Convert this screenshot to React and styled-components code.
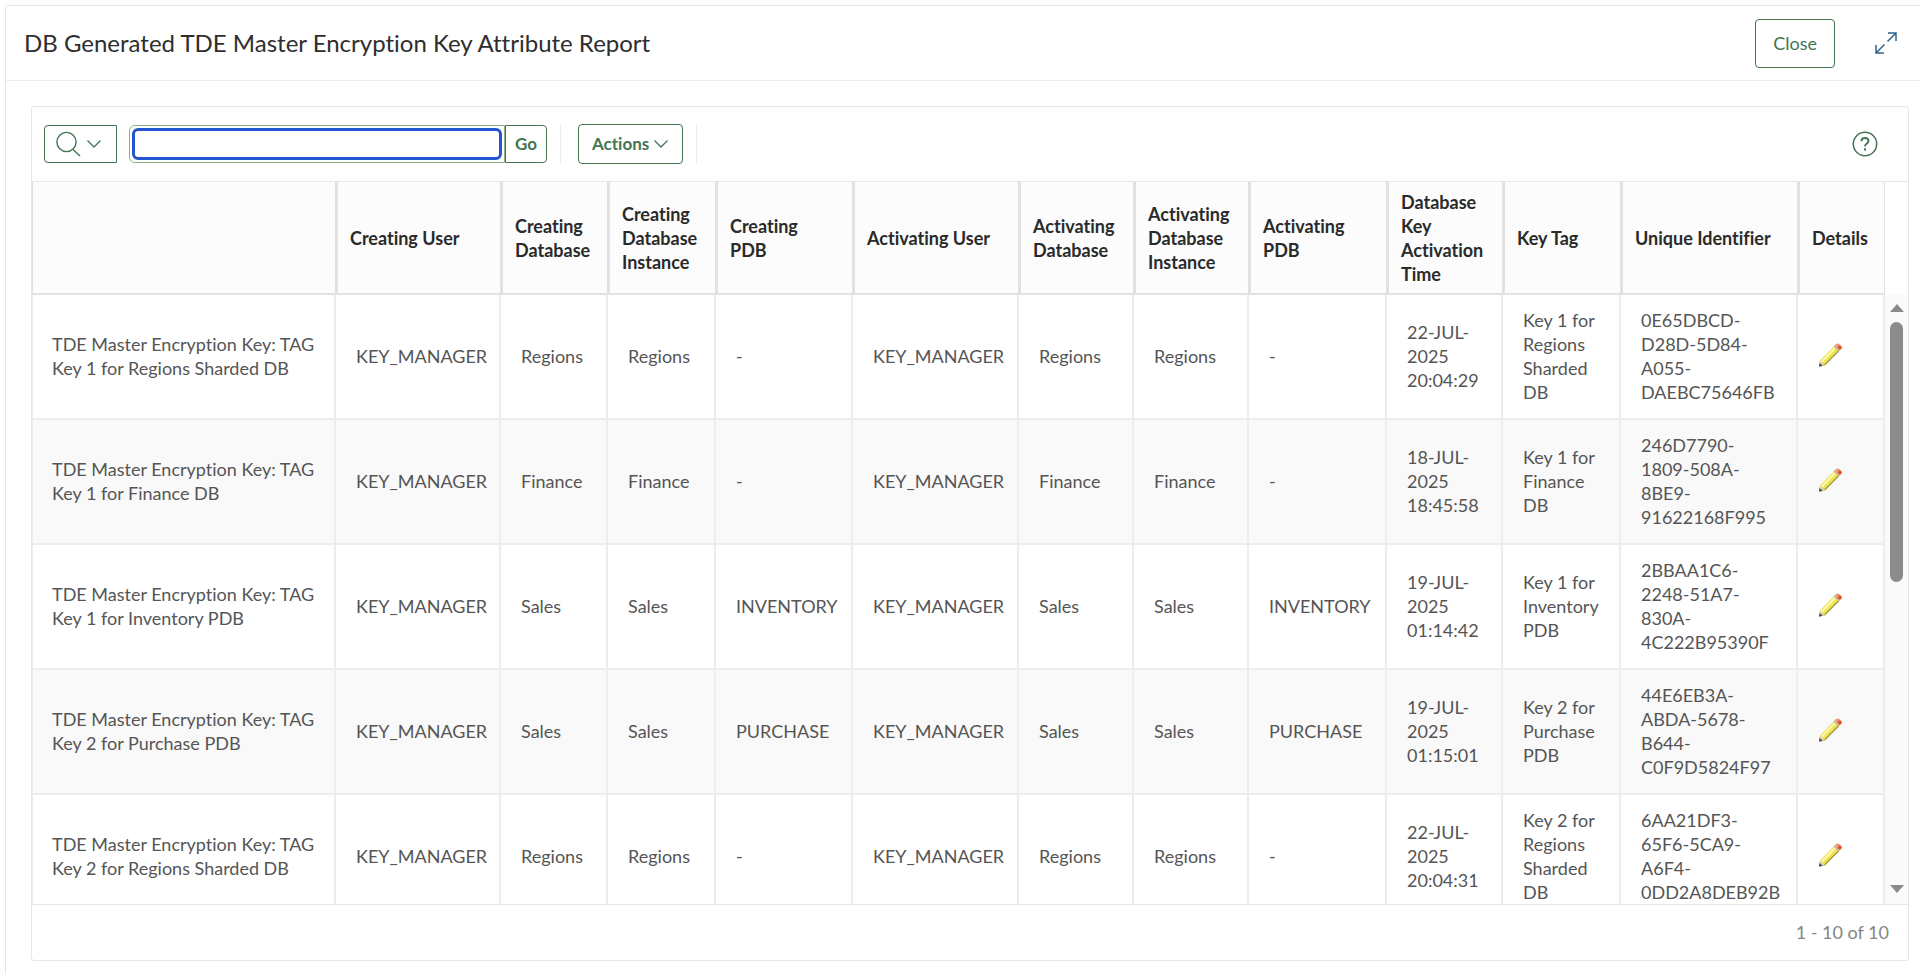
import React from 'react';
import styled, { createGlobalStyle } from 'styled-components';

const GlobalStyle = createGlobalStyle`
  *, *::before, *::after { box-sizing: border-box; }
  body {
    margin: 0;
    background: #fff;
    color: #555;
    font-family: Lato, 'Noto Sans', sans-serif;
    font-size: 18px;
    font-variant-ligatures: none;
    line-height: 24px;
  }
  button, input { font: inherit; font-variant-ligatures: none; }
`;

const green = '#437553';

const Dialog = styled.main`
  display: flex;
  flex-direction: column;
  height: 100vh;
  min-height: 600px;
  padding: 5px 0 0 5px;
  overflow: hidden;
`;

const Panel = styled.div`
  flex: 1;
  display: flex;
  flex-direction: column;
  min-height: 0;
  border: solid #e6e6e6;
  border-width: 1px 0 0 1px;
  border-radius: 3px 0 0 0;
`;

const Header = styled.header`
  display: flex;
  align-items: center;
  justify-content: space-between;
  height: 75px;
  padding: 0 19px 0 18px;
  border-bottom: 1px solid #ececec;
`;

const Title = styled.h1`
  margin: 0;
  color: #2e2e2e;
  font-size: 24px;
  font-weight: 400;
  line-height: 32px;
`;

const HeaderActions = styled.div`
  display: flex;
  align-items: center;
  gap: 36px;
`;

const Button = styled.button`
  display: inline-flex;
  align-items: center;
  justify-content: center;
  gap: 4px;
  height: ${(p) => p.$height || 40}px;
  padding: 0 ${(p) => p.$pad || 12}px;
  border: 1px solid ${green};
  border-radius: ${(p) => p.$radius || '4px'};
  background: #fff;
  color: ${green};
  font-size: ${(p) => p.$size || 17}px;
  font-weight: ${(p) => p.$weight || 700};
  cursor: pointer;
`;

const SearchMenuButton = styled(Button)`
  padding: 0 14px 0 10px;
`;

const IconButton = styled.button`
  display: flex;
  padding: 4px;
  border: 0;
  background: none;
  color: ${(p) => p.$color};
  cursor: pointer;
`;

const EditButton = styled(IconButton)`
  padding: 0 0 2px;
`;

const Region = styled.section`
  flex: 1;
  display: flex;
  flex-direction: column;
  min-height: 0;
  margin: 25px 11px 13px 25px;
  border: 1px solid #e6e6e6;
  border-radius: 3px;
`;

const Toolbar = styled.div`
  display: flex;
  align-items: center;
  height: 75px;
  padding: 0 26px 0 12px;
  border-bottom: 1px solid #e6e6e6;
`;

const SearchForm = styled.form`
  display: flex;
  margin-left: 12px;
`;

const SearchInput = styled.input`
  width: 100%;
  height: 32px;
  padding: 0 8px;
  border: 3px solid #2455d0;
  border-radius: 6px;
  outline: none;
  background: #fff;
`;

const SearchField = styled.div`
  width: 376px;
  height: 38px;
  padding: 2px;
  border: 1px solid #8fb182;
  border-radius: 6px 0 0 6px;
`;

const Divider = styled.span`
  width: 1px;
  height: 38px;
  margin: 0 ${(p) => p.$after || 0}px 0 ${(p) => p.$before || 0}px;
  background: #ececec;
`;

const HelpSlot = styled.div`
  margin-left: auto;
`;

const Grid = styled.div`
  flex: 1;
  display: flex;
  min-height: 0;
`;

const TableViewport = styled.div`
  flex: 1;
  min-width: 0;
  overflow: hidden;
`;

const Table = styled.table`
  width: 100%;
  table-layout: fixed;
  border-collapse: separate;
  border-spacing: 0;
`;

const HeadCell = styled.th`
  height: 113px;
  padding: 0 16px 0 12px;
  border: solid #e2e2e2;
  border-width: 0 1px 2px 2px;
  background: #fcfcfc;
  color: #2a2a2a;
  font-weight: 700;
  text-align: left;

  &:first-child { border-left-width: 1px; }
`;

const Cell = styled.td`
  height: 125px;
  padding: 0 16px 2px 20px;
  border: solid #ededed;
  border-width: 0 2px 2px 0;

  &:first-child { border-left-width: 1px; padding-left: 19px; }
  tr:nth-child(even) > & { background: #f9f9f9; }
`;

const ScrollGutter = styled.div`
  display: flex;
  flex-direction: column;
  width: 23px;
  padding-top: 113px;
`;

const ScrollTrack = styled.div`
  flex: 1;
  display: flex;
  flex-direction: column;
  align-items: center;
  padding: 9px 0 11px;
  background: #fafafa;
`;

const ScrollRange = styled.div`
  flex: 1;
  width: 13px;
  margin: 10px 0;
`;

const ScrollThumb = styled.div`
  height: 47%;
  border-radius: 7px;
  background: #8b8b8b;
`;

const Footer = styled.footer`
  display: flex;
  align-items: center;
  justify-content: flex-end;
  height: 56px;
  padding: 0 19px 2px;
  border-top: 1px solid #e6e6e6;
  color: #858585;
`;

const Chevron = () => (
  <svg width="16" height="16" viewBox="0 0 16 16" fill="none" stroke="currentColor" strokeWidth="1.3" aria-hidden="true">
    <path d="M1.500 4.500 8 11l6.500-6.500" />
  </svg>
);

const SearchIcon = () => (
  <svg width="27" height="26" viewBox="0 0 27 26" fill="none" stroke="currentColor" strokeWidth="1.4" aria-hidden="true">
    <circle cx="11.5" cy="11" r="9.6" />
    <path d="m18 18.500 7 6.500" />
  </svg>
);

const ExpandIcon = () => (
  <svg width="22" height="22" viewBox="0 0 22 22" fill="none" stroke="currentColor" strokeWidth="1.5" aria-hidden="true">
    <path d="M13 1h8v8M21 1l-8.500 8.500M9 21H1v-8M1 21l8.500-8.500" />
  </svg>
);

const HelpIcon = () => (
  <svg width="26" height="26" viewBox="0 0 26 26" fill="none" stroke="currentColor" aria-hidden="true">
    <circle cx="13" cy="13" r="11.700" strokeWidth="1.500" />
    <path d="M9.500 10.200c0-4.300 7-4.300 7 0 0 2.500-3.500 2.300-3.500 5.300" strokeWidth="1.900" />
    <path d="M13 17.300v2.200" strokeWidth="2" />
  </svg>
);

const PencilIcon = () => (
  <svg width="24" height="24" viewBox="0 0 24 24" aria-hidden="true">
    <path d="M1 23.500 2 17.500 17 2l5 5L7 22.500z" fill="#f0e352" />
    <path d="M3.500 19 18 4" stroke="#fbf8b0" strokeWidth="2.200" />
    <path d="M6.500 22 21 7.500" stroke="#a39a45" strokeWidth="1.300" />
    <path d="M1 23.500 2 17.500l5 5z" fill="#d9cf9a" />
    <path d="M1 23.500 1.600 20l3 3z" fill="#3c4263" />
    <path d="m15.500 3.500 2.300-2.300 5 5-2.300 2.300z" fill="#c9b5a0" />
    <path d="m17.500 1.500 1.500-1q3.500 0 4.500 4l-1.500 2.300z" fill="#e9967c" />
    <circle cx="21.800" cy="4.500" r="2" fill="#f0501e" />
  </svg>
);

const columns = [
  { label: '', width: 304 },
  { label: 'Creating User', width: 165 },
  { label: 'Creating Database', width: 107 },
  { label: 'Creating Database Instance', width: 108 },
  { label: 'Creating PDB', width: 137 },
  { label: 'Activating User', width: 166 },
  { label: 'Activating Database', width: 115 },
  { label: 'Activating Database Instance', width: 115 },
  { label: 'Activating PDB', width: 138 },
  { label: 'Database Key Activation Time', width: 116 },
  { label: 'Key Tag', width: 118 },
  { label: 'Unique Identifier', width: 177 },
  { label: 'Details', width: 87 },
];

const keys = [
  { tag: 'Key 1 for Regions Sharded DB', db: 'Regions', pdb: '-', time: '22-JUL-2025 20:04:29', id: '0E65DBCD-D28D-5D84-A055-DAEBC75646FB' },
  { tag: 'Key 1 for Finance DB', db: 'Finance', pdb: '-', time: '18-JUL-2025 18:45:58', id: '246D7790-1809-508A-8BE9-91622168F995' },
  { tag: 'Key 1 for Inventory PDB', db: 'Sales', pdb: 'INVENTORY', time: '19-JUL-2025 01:14:42', id: '2BBAA1C6-2248-51A7-830A-4C222B95390F' },
  { tag: 'Key 2 for Purchase PDB', db: 'Sales', pdb: 'PURCHASE', time: '19-JUL-2025 01:15:01', id: '44E6EB3A-ABDA-5678-B644-C0F9D5824F97' },
  { tag: 'Key 2 for Regions Sharded DB', db: 'Regions', pdb: '-', time: '22-JUL-2025 20:04:31', id: '6AA21DF3-65F6-5CA9-A6F4-0DD2A8DEB92B' },
];

const user = 'KEY_MANAGER';

const KeyRow = ({ item }) => (
  <tr>
    <Cell>TDE Master Encryption Key: TAG {item.tag}</Cell>
    <Cell>{user}</Cell>
    <Cell>{item.db}</Cell>
    <Cell>{item.db}</Cell>
    <Cell>{item.pdb}</Cell>
    <Cell>{user}</Cell>
    <Cell>{item.db}</Cell>
    <Cell>{item.db}</Cell>
    <Cell>{item.pdb}</Cell>
    <Cell>{item.time}</Cell>
    <Cell>{item.tag}</Cell>
    <Cell>{item.id}</Cell>
    <Cell>
      <EditButton type="button" aria-label={`Details of ${item.tag}`}><PencilIcon /></EditButton>
    </Cell>
  </tr>
);

export default function App() {
  return (
    <Dialog>
      <GlobalStyle />
      <Panel>
        <Header>
          <Title>DB Generated TDE Master Encryption Key Attribute Report</Title>
          <HeaderActions>
            <Button type="button" $height={49} $pad={17} $size={18} $weight={400}>Close</Button>
            <IconButton type="button" $color="#2f6690" aria-label="Maximize"><ExpandIcon /></IconButton>
          </HeaderActions>
        </Header>
        <Region>
          <Toolbar>
            <SearchMenuButton type="button" $height={38} $radius="4px 0 0 4px" aria-label="Select columns to search">
              <SearchIcon />
              <Chevron />
            </SearchMenuButton>
            <SearchForm role="search" onSubmit={(e) => e.preventDefault()}>
              <SearchField>
                <SearchInput type="text" aria-label="Search report" />
              </SearchField>
              <Button type="submit" $height={38} $pad={9} $radius="0 4px 4px 0">Go</Button>
            </SearchForm>
            <Divider $before={13} $after={17} />
            <Button type="button" $height={40} $pad={13}>
              Actions
              <Chevron />
            </Button>
            <Divider $before={13} />
            <HelpSlot>
              <IconButton type="button" $color={green} aria-label="Help"><HelpIcon /></IconButton>
            </HelpSlot>
          </Toolbar>
          <Grid>
            <TableViewport>
              <Table>
                <colgroup>
                  {columns.map((c, i) => <col key={i} width={c.width} />)}
                </colgroup>
                <thead>
                  <tr>
                    {columns.map((c, i) => <HeadCell key={i} scope="col">{c.label}</HeadCell>)}
                  </tr>
                </thead>
                <tbody>
                  {keys.map((item) => <KeyRow key={item.id} item={item} />)}
                </tbody>
              </Table>
            </TableViewport>
            <ScrollGutter aria-hidden="true">
              <ScrollTrack>
                <svg width="14" height="8" viewBox="0 0 14 8"><path d="M7 0l7 8H0z" fill="#8b8b8b" /></svg>
                <ScrollRange><ScrollThumb /></ScrollRange>
                <svg width="14" height="8" viewBox="0 0 14 8"><path d="M0 0h14L7 8z" fill="#8b8b8b" /></svg>
              </ScrollTrack>
            </ScrollGutter>
          </Grid>
          <Footer>1 - 10 of 10</Footer>
        </Region>
      </Panel>
    </Dialog>
  );
}
